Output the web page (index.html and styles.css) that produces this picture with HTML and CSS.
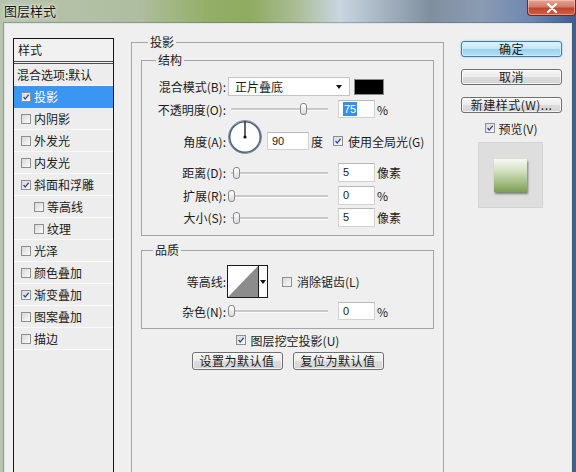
FILE: index.html
```html
<!DOCTYPE html>
<html lang="zh-CN">
<head>
<meta charset="utf-8">
<title>图层样式</title>
<link rel="stylesheet" href="styles.css">
</head>
<body>
<div class="win">
  <div class="titlebar">
    <span class="title">图层样式</span>
    <div class="close"><svg width="12" height="10" viewBox="0 0 12 10"><path d="M2 1 L10 9 M10 1 L2 9" stroke="#fff" stroke-width="2.2" stroke-linecap="round"/></svg></div>
  </div>
  <div class="client">
    <div class="list">
      <div class="list-head">样式</div>
      <div class="row plain">混合选项:默认</div>
      <div class="row sel"><span class="cb"><svg viewBox="0 0 10 10"><path d="M2 5 L4 7.6 L8.3 2.2"/></svg></span>投影</div>
      <div class="row"><span class="cb"></span>内阴影</div>
      <div class="row"><span class="cb"></span>外发光</div>
      <div class="row"><span class="cb"></span>内发光</div>
      <div class="row"><span class="cb"><svg viewBox="0 0 10 10"><path d="M2 5 L4 7.6 L8.3 2.2"/></svg></span>斜面和浮雕</div>
      <div class="row sub"><span class="cb"></span>等高线</div>
      <div class="row sub"><span class="cb"></span>纹理</div>
      <div class="row"><span class="cb"></span>光泽</div>
      <div class="row"><span class="cb"></span>颜色叠加</div>
      <div class="row"><span class="cb"><svg viewBox="0 0 10 10"><path d="M2 5 L4 7.6 L8.3 2.2"/></svg></span>渐变叠加</div>
      <div class="row"><span class="cb"></span>图案叠加</div>
      <div class="row"><span class="cb"></span>描边</div>
    </div>

    <fieldset class="grp outer">
      <legend>投影</legend>
      <div class="outer-body">
        <fieldset class="grp inner struct">
          <legend>结构</legend>
          <div class="frow r-blend">
            <span class="lbl">混合模式(B):</span>
            <div class="select">正片叠底<span class="arrow"></span></div>
            <div class="swatch"></div>
          </div>
          <div class="frow r-op">
            <span class="lbl">不透明度(O):</span>
            <div class="slider"><span class="thumb" style="left:72px"></span></div>
            <div class="num"><span class="hl">75</span></div>
            <span class="unit">%</span>
          </div>
          <div class="frow r-angle">
            <span class="lbl">角度(A):</span>
            <svg class="dial" width="36" height="36" viewBox="0 0 36 36">
              <circle cx="18" cy="18" r="16.5" fill="#fdfdfd" stroke="#8a96a4" stroke-width="1"/>
              <circle cx="18" cy="18" r="15.3" fill="none" stroke="#56677c" stroke-width="1.6"/>
              <line x1="18" y1="18" x2="18" y2="2.5" stroke="#111" stroke-width="1.3"/>
              <circle cx="18" cy="18" r="1.6" fill="#111"/>
            </svg>
            <div class="num wide">90</div>
            <span class="unit deg">度</span>
            <span class="cb"><svg viewBox="0 0 10 10"><path d="M2 5 L4 7.6 L8.3 2.2"/></svg></span>
            <span class="cbtext">使用全局光(G)</span>
          </div>
          <div class="frow r-dist">
            <span class="lbl">距离(D):</span>
            <div class="slider"><span class="thumb" style="left:5px"></span></div>
            <div class="num">5</div>
            <span class="unit">像素</span>
          </div>
          <div class="frow r-spread">
            <span class="lbl">扩展(R):</span>
            <div class="slider"><span class="thumb" style="left:0px"></span></div>
            <div class="num">0</div>
            <span class="unit">%</span>
          </div>
          <div class="frow r-size">
            <span class="lbl">大小(S):</span>
            <div class="slider"><span class="thumb" style="left:5px"></span></div>
            <div class="num">5</div>
            <span class="unit">像素</span>
          </div>
        </fieldset>

        <fieldset class="grp inner quality">
          <legend>品质</legend>
          <div class="frow r-contour">
            <span class="lbl">等高线:</span>
            <div class="contour">
              <svg width="30" height="31" viewBox="0 0 30 31"><polygon points="0,31 30,0 30,31" fill="#8c8c8c"/></svg>
            </div>
            <div class="contour-arrow"><span class="arrow"></span></div>
            <span class="cb aa"></span>
            <span class="cbtext">消除锯齿(L)</span>
          </div>
          <div class="frow r-noise">
            <span class="lbl">杂色(N):</span>
            <div class="slider"><span class="thumb" style="left:0px"></span></div>
            <div class="num">0</div>
            <span class="unit">%</span>
          </div>
        </fieldset>

        <div class="knock">
          <span class="cb"><svg viewBox="0 0 10 10"><path d="M2 5 L4 7.6 L8.3 2.2"/></svg></span>
          <span class="cbtext">图层挖空投影(U)</span>
        </div>
        <div class="defaults">
          <div class="btn">设置为默认值</div>
          <div class="btn">复位为默认值</div>
        </div>
      </div>
    </fieldset>

    <div class="side">
      <div class="btn big primary">确定</div>
      <div class="btn big">取消</div>
      <div class="btn big">新建样式(W)...</div>
      <div class="preview-check">
        <span class="cb"><svg viewBox="0 0 10 10"><path d="M2 5 L4 7.6 L8.3 2.2"/></svg></span>
        <span class="cbtext">预览(V)</span>
      </div>
      <div class="preview"><div class="swatch-prev"></div></div>
    </div>
  </div>
</div>
</body>
</html>
```

FILE: styles.css
```css
* { box-sizing: border-box; }
html, body { margin: 0; padding: 0; }
body {
  width: 576px;
  height: 472px;
  overflow: hidden;
  font-family: "Noto Sans CJK SC", "Liberation Sans", sans-serif;
  font-size: 12px;
  color: #1b1b1b;
  background: linear-gradient(90deg, #b8c4ad 0px, #aebd9f 140px, #93ae66 210px, #8fab62 250px, #a9bc93 295px, #c9d6e1 340px, #a8b6c4 380px, #808f9f 430px, #8b9bb2 480px, #6f88b2 530px, #3d5d94 576px);
}
.win { height: 472px; display: flex; flex-direction: column; }

/* title bar */
.titlebar { height: 23px; display: flex; align-items: flex-start; flex: none; }
.title {
  padding: 3px 0 0 4px;
  font-size: 13px;
  line-height: 16px;
  color: #141414;
  text-shadow: 0 0 5px rgba(255,255,255,0.9), 0 0 2px rgba(255,255,255,0.8);
}
.close {
  margin-left: auto;
  width: 49px;
  height: 16px;
  border: 1px solid #6e2a20;
  border-top: none;
  border-radius: 0 0 4px 4px;
  background: linear-gradient(#e7a493 0%, #d47c68 45%, #c0442c 55%, #d0604a 100%);
  display: flex;
  align-items: center;
  justify-content: center;
  box-shadow: inset 0 0 0 1px rgba(255,220,210,0.45);
}

/* client */
.client {
  flex: 1;
  margin: 0 4px 0 4px;
  border: 1px solid #dfe5e3;
  border-bottom: none;
  box-shadow: 0 0 0 1px rgba(70,85,95,0.35);
  background: #efefef;
  display: flex;
  align-items: flex-start;
  padding: 11px 0 0 8px;
  overflow: hidden;
}

/* style list */
.list {
  margin-top: 3px;
  width: 101px;
  height: 460px;
  flex: none;
  border: 1px solid #151515;
  border-bottom: none;
  background: #ededed;
}
.list-head {
  height: 25px;
  line-height: 22px;
  padding-left: 4px;
  border-bottom: 3px double #505050;
  background: #f1f1f1;
}
.row {
  height: 22px;
  line-height: 21px;
  border-bottom: 1px solid #fafafa;
  display: flex;
  align-items: center;
  padding-left: 7px;
  white-space: nowrap;
}
.row.plain { padding-left: 3px; }
.row.sub { padding-left: 20px; }
.row .cb { margin-right: 3px; }
.row.sel { background: #3b96f3; color: #fff; border-bottom-color: #3b96f3; }

/* checkbox */
.cb {
  width: 10px;
  height: 10px;
  flex: none;
  border: 1px solid #8e8f8f;
  background: linear-gradient(135deg, #d8d8d8, #fbfbfb);
  display: inline-flex;
}
.cb svg { width: 8px; height: 8px; }
.cb svg path { fill: none; stroke: #2b469a; stroke-width: 1.6; }
.cbtext { margin-left: 5px; white-space: nowrap; }

/* group boxes */
.grp {
  margin: 0;
  padding: 0;
  border: 1px solid #a4a4a4;
  min-width: 0;
}
.grp legend {
  padding: 0 2px;
  font-size: 12px;
  line-height: 14px;
}
.outer {
  margin-left: 17px;
  width: 313px;
  height: 460px;
  flex: none;
}
.outer > legend { margin-left: 16px; }
.outer-body { padding: 0 9px; display: flex; flex-direction: column; }
.inner > legend { margin-left: 14px; }
.struct { margin-top: 4px; padding-bottom: 8px; }
.quality { margin-top: 7px; padding-bottom: 8px; }
.quality > legend { margin-left: 11px; }

.frow { display: flex; align-items: center; white-space: nowrap; }
.lbl { width: 84px; text-align: right; flex: none; }

.r-blend { margin-top: 10px; height: 19px; }
.r-op { margin-top: 4px; height: 18px; }
.r-angle { margin-top: 8px; height: 30px; }
.r-dist { margin-top: 7px; height: 19px; }
.r-spread { margin-top: 4px; height: 19px; }
.r-size { margin-top: 3px; height: 19px; }
.r-contour { margin-top: 8px; height: 33px; }
.r-noise { margin-top: 4px; height: 18px; }

.select {
  margin-left: 2px;
  width: 122px;
  height: 19px;
  background: #fff;
  border: 1px solid #c4c4c4;
  padding-left: 6px;
  line-height: 17px;
  display: flex;
  align-items: center;
}
.select .arrow { margin-left: auto; margin-right: 7px; }
.arrow {
  width: 0; height: 0;
  border-left: 3px solid transparent;
  border-right: 3px solid transparent;
  border-top: 4px solid #111;
}
.swatch {
  margin-left: 4px;
  width: 30px;
  height: 16px;
  background: #000;
  border: 1px solid #8a8a8a;
}

.slider {
  position: relative;
  margin-left: 2px;
  width: 100px;
  height: 12px;
  flex: none;
}
.slider::before {
  content: "";
  position: absolute;
  left: 3px; right: 0; top: 5px;
  height: 2px;
  background: #c9c9c9;
  border-bottom: 1px solid #fbfbfb;
}
.thumb {
  position: absolute;
  top: 0;
  width: 7px;
  height: 12px;
  border: 1px solid #878787;
  border-radius: 3px;
  background: linear-gradient(#ffffff, #dcdcdc);
}
.num {
  margin-left: 10px;
  width: 37px;
  height: 18px;
  background: #fff;
  border: 1px solid #d2d2d2;
  border-top-color: #b9b9b9;
  font-family: "Liberation Sans", Arial, sans-serif;
  font-size: 11px;
  line-height: 16px;
  padding-left: 4px;
  flex: none;
}
.r-dist .num, .r-spread .num, .r-size .num { height: 19px; line-height: 17px; }
.hl { background: #3a8ee6; color: #fff; padding: 0 1px; display: inline-block; line-height: 14px; }
.unit { margin-left: 2px; font-family: "Noto Sans CJK SC", "Liberation Sans", sans-serif; }

.dial { margin-left: 1px; margin-top: -8px; flex: none; }
.num.wide { margin-left: 4px; width: 42px; }
.unit.deg { margin-left: 2px; }
.r-angle .cb { margin-left: 10px; }

.contour {
  margin-left: 1px;
  width: 32px;
  height: 33px;
  border: 1px solid #1a1a1a;
  background: #fff;
  flex: none;
  display: flex;
}
.contour-arrow {
  width: 9px;
  height: 33px;
  border: 1px solid #1a1a1a;
  border-left: none;
  background: #fafafa;
  display: flex;
  align-items: center;
  justify-content: center;
  flex: none;
}
.cb.aa { margin-left: 14px; }

.knock {
  margin-top: 2px;
  height: 18px;
  display: flex;
  align-items: center;
  justify-content: center;
}
.defaults {
  margin-top: 3px;
  display: flex;
  justify-content: center;
  gap: 10px;
}
.btn {
  height: 18px;
  width: 91px;
  border: 1px solid #707070;
  border-radius: 3px;
  background: linear-gradient(#f7f7f7 0%, #ececec 48%, #dcdcdc 52%, #d4d4d4 100%);
  box-shadow: inset 0 0 0 1px rgba(255,255,255,0.7);
  text-align: center;
  line-height: 16px;
  white-space: nowrap;
  letter-spacing: 0.5px;
}

/* right column */
.side {
  margin-left: 17px;
  margin-top: 6px;
  width: 101px;
  flex: none;
  display: flex;
  flex-direction: column;
}
.btn.big { width: 101px; height: 16px; line-height: 14px; }
.btn.big + .btn.big { margin-top: 12px; }
.btn.primary {
  border-color: #3c7fb1;
  background: linear-gradient(#e5f4fc 0%, #c4e5f6 48%, #98d1ef 52%, #b6e0f4 100%);
  box-shadow: inset 0 0 0 1px rgba(200,240,255,0.9), 0 0 2px rgba(60,150,220,0.6);
}
.preview-check {
  margin-top: 9px;
  height: 12px;
  display: flex;
  align-items: center;
  justify-content: center;
}
.preview-check .cbtext { margin-left: 3px; }
.preview {
  margin-top: 8px;
  margin-left: 17px;
  width: 65px;
  height: 66px;
  background: #dedede;
  border: 1px solid #d4d4d4;
  display: flex;
  align-items: center;
  justify-content: center;
}
.swatch-prev {
  width: 33px;
  height: 33px;
  background: linear-gradient(#f5f8f1 0%, #d4e2c4 35%, #a6bf85 70%, #7f9c58 100%);
  box-shadow: 1px 2px 2px rgba(40,50,30,0.55);
}
```
